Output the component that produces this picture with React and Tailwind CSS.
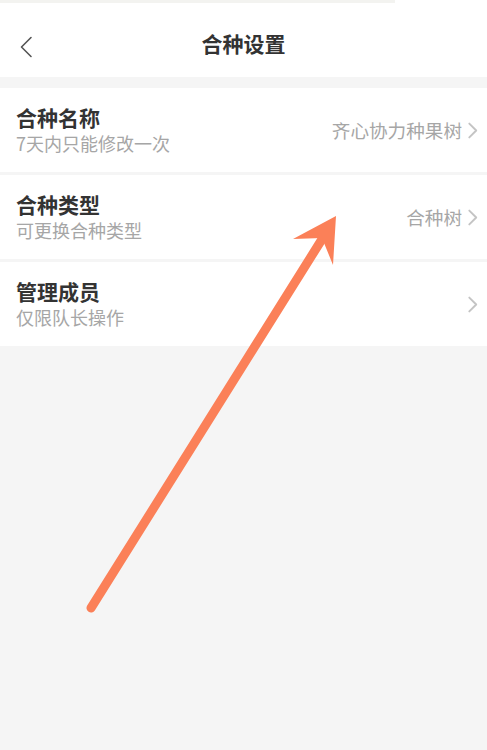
import React from 'react';

const ROWS = [
  { title: '合种名称', sub: '7天内只能修改一次', value: '齐心协力种果树' },
  { title: '合种类型', sub: '可更换合种类型', value: '合种树' },
  { title: '管理成员', sub: '仅限队长操作', value: '' },
];

function Chevron({ className }) {
  return (
    <svg viewBox="0 0 10 16" className={className} fill="none">
      <path d="M2 1.5l6.5 6.5-6.5 6.5" stroke="currentColor" strokeWidth="1.8" strokeLinecap="round" strokeLinejoin="round" />
    </svg>
  );
}

function Row({ title, sub, value }) {
  return (
    <div className="bg-white h-[84px] px-4 flex items-center">
      <div className="flex-1 min-w-0">
        <div className="text-[21px] leading-[26px] font-bold text-[#333]">{title}</div>
        <div className="text-[18px] leading-[26px] text-[#a6a6a6]">{sub}</div>
      </div>
      {value && <span className="text-[18.6px] text-[#a6a6a6] mr-[5px]">{value}</span>}
      <Chevron className="w-[11px] h-[17px] text-[#c4c4c4] mr-[-7px]" />
    </div>
  );
}

export default function App() {
  return (
    <div
      className="relative w-full min-h-[750px] bg-[#f5f5f5] overflow-hidden"
      style={{ fontFamily: '"Noto Sans CJK SC", "Noto Sans", sans-serif' }}
    >
      {/* header */}
      <div className="bg-white h-[77px] relative">
        <div className="h-[3px] w-[395px] bg-[#f3f3f0]" />
        <div className="h-[74px] pt-[8px] flex items-center justify-center">
          <span className="text-[21px] font-bold text-[#333]">合种设置</span>
        </div>
        <svg viewBox="0 0 14 22" className="absolute left-[19px] top-[36px] w-[14px] h-[22px] text-[#555]" fill="none">
          <path d="M12 1.5L2.5 11 12 20.5" stroke="currentColor" strokeWidth="1.6" strokeLinecap="round" strokeLinejoin="round" />
        </svg>
      </div>

      <div className="mt-[11px] flex flex-col gap-[3px]">
        {ROWS.map(r => <Row key={r.title} {...r} />)}
      </div>

      {/* annotation arrow */}
      <svg className="absolute inset-0 w-[487px] h-[750px] pointer-events-none" viewBox="0 0 487 750">
        <line x1="91" y1="608" x2="324" y2="236" stroke="#fb8058" strokeWidth="9" strokeLinecap="round" />
        <polygon points="336,216 293,239 322,238 333,265" fill="#fb8058" />
      </svg>
    </div>
  );
}
